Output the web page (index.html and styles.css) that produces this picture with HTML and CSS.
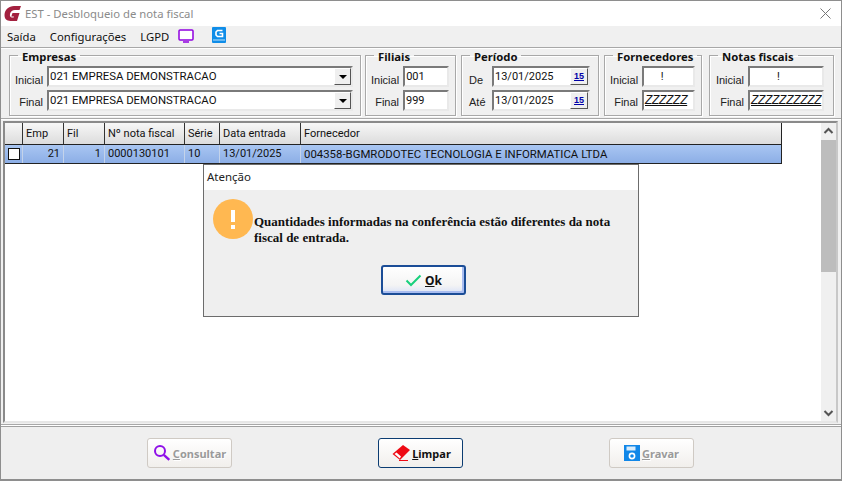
FILE: index.html
```html
<!DOCTYPE html>
<html lang="pt">
<head>
<meta charset="utf-8">
<title>EST - Desbloqueio de nota fiscal</title>
<link rel="stylesheet" href="styles.css">
</head>
<body>
<div class="window">
  <header class="titlebar">
    <svg class="logo" width="18" height="17" viewBox="0 0 18 17"><path d="M10 1C5 1 .5 4.500.5 10S4 16 8 16h5l2.500-8H8.500l-1.200 3.500H10l-.4 1H8C6.500 12.500 5.500 11 6 9c.6-2.500 2.500-4 5-4h4.500L17 1z" fill="#a3213f"/></svg>
    <span class="title">EST - Desbloqueio de nota fiscal</span>
    <svg class="close" width="11" height="11" viewBox="0 0 11 11"><path d="M.5.5l10 10M10.500.5l-10 10" stroke="#777" fill="none"/></svg>
  </header>
  <nav class="menubar">
    <span class="menu-item">Saída</span>
    <span class="menu-item">Configurações</span>
    <span class="menu-item">LGPD</span>
    <svg class="menu-monitor" width="16" height="14" viewBox="0 0 16 14"><rect x="1" y="1" width="14" height="10" rx="1" fill="#fff" stroke="#9000e0" stroke-width="1.500"/><path d="M5 13h6" stroke="#9000e0" stroke-width="1.500"/></svg>
    <svg class="menu-book" width="14" height="16" viewBox="0 0 14 16"><rect width="14" height="16" rx="1" fill="#0f8de8"/><path d="M10.500 3.500H5.500L4 5v3l1.500 1.500h5V6.500H7.500" fill="none" stroke="#fff" stroke-width="1.600"/><path d="M1 13h12" stroke="#bfe2fb"/></svg>
  </nav>
  <section class="filters">
    <fieldset class="group group-empresas">
      <legend>Empresas</legend>
      <div class="field"><label>Inicial</label><div class="combo"><span class="combo-text">021 EMPRESA DEMONSTRACAO</span><span class="combo-btn"><i></i></span></div></div>
      <div class="field"><label>Final</label><div class="combo"><span class="combo-text">021 EMPRESA DEMONSTRACAO</span><span class="combo-btn"><i></i></span></div></div>
    </fieldset>
    <fieldset class="group group-filiais">
      <legend>Filiais</legend>
      <div class="field"><label>Inicial</label><div class="input w47">001</div></div>
      <div class="field"><label>Final</label><div class="input w47">999</div></div>
    </fieldset>
    <fieldset class="group group-periodo">
      <legend>Período</legend>
      <div class="field"><label>De</label><div class="input date">13/01/2025<span class="cal">15</span></div></div>
      <div class="field"><label>Até</label><div class="input date">13/01/2025<span class="cal">15</span></div></div>
    </fieldset>
    <fieldset class="group group-forn">
      <legend>Fornecedores</legend>
      <div class="field"><label>Inicial</label><div class="input w53 center">!</div></div>
      <div class="field"><label>Final</label><div class="input w53 zz">ZZZZZZ</div></div>
    </fieldset>
    <fieldset class="group group-notas">
      <legend>Notas fiscais</legend>
      <div class="field"><label>Inicial</label><div class="input w76 center">!</div></div>
      <div class="field"><label>Final</label><div class="input w76 zz">ZZZZZZZZZZ</div></div>
    </fieldset>
  </section>
  <section class="grid-frame">
    <div class="grid">
      <div class="grid-head">
        <span class="c c0"></span><span class="c c1">Emp</span><span class="c c2">Fil</span><span class="c c3">Nº nota fiscal</span><span class="c c4">Série</span><span class="c c5">Data entrada</span><span class="c c6">Fornecedor</span>
      </div>
      <div class="grid-row">
        <span class="c c0"><i class="check"></i></span><span class="c c1 right">21</span><span class="c c2 right">1</span><span class="c c3">0000130101</span><span class="c c4">10</span><span class="c c5">13/01/2025</span><span class="c c6">004358-BGMRODOTEC TECNOLOGIA E INFORMATICA LTDA</span>
      </div>
    </div>
    <div class="scrollbar">
      <svg class="arrow" width="15" height="17" viewBox="0 0 15 17"><path d="M3.500 10l4-4 4 4" fill="none" stroke="#555" stroke-width="2"/></svg>
      <div class="track"><div class="thumb"></div></div>
      <svg class="arrow" width="15" height="17" viewBox="0 0 15 17"><path d="M3.500 7l4 4 4-4" fill="none" stroke="#555" stroke-width="2"/></svg>
    </div>
  </section>
  <footer class="actions">
    <button class="btn disabled">
      <svg width="18" height="18" viewBox="0 0 18 18"><circle cx="7" cy="7" r="5" fill="none" stroke="#8f10e8" stroke-width="2"/><path d="M10.800 10.800l5.500 5" stroke="#8f10e8" stroke-width="2.400"/></svg>
      <span><u>C</u>onsultar</span>
    </button>
    <button class="btn active">
      <svg width="20" height="18" viewBox="0 0 20 18"><path d="M13 1l7 5-10 10-7.500-6z" fill="#ee0a14"/><path d="M4.500 10l2-1.500 4.500 4-1.200 2z" fill="#fff"/><path d="M9 16.500h9" stroke="#ee0a14"/></svg>
      <span><u>L</u>impar</span>
    </button>
    <button class="btn disabled">
      <svg width="16" height="16" viewBox="0 0 16 16"><path d="M0 0h16v16H0z" fill="#1187e8"/><rect x="2.500" y="1.500" width="9" height="4" fill="#d9ecfb"/><circle cx="8" cy="11" r="2.600" fill="none" stroke="#fff" stroke-width="1.600"/></svg>
      <span><u>G</u>ravar</span>
    </button>
  </footer>
  <div class="dialog">
    <div class="dialog-title">Atenção</div>
    <div class="dialog-body">
      <div class="dialog-msg">
        <div class="alert-icon"><i></i><b></b></div>
        <p>Quantidades informadas na conferência estão diferentes da nota fiscal de entrada.</p>
      </div>
      <button class="ok">
        <svg width="17" height="13" viewBox="0 0 17 13"><path d="M1.500 6.500l4.500 4.500 9.500-9.500" fill="none" stroke="#18d07c" stroke-width="2"/></svg>
        <span><u>O</u>k</span>
      </button>
    </div>
  </div>
</div>
</body>
</html>
```
FILE: styles.css
```css
* { box-sizing: border-box; }
html, body { margin: 0; padding: 0; }
body { width: 842px; height: 481px; overflow: hidden; background: #f0f0f0; font-family: "Noto Sans", "Liberation Sans", sans-serif; }
.window { position: relative; width: 842px; height: 481px; border: 1px solid #8e8e8e; border-bottom: 2px solid #8e8e8e; background: #f0f0f0; display: flex; flex-direction: column; }

.titlebar { height: 25px; background: #fff; display: flex; align-items: center; padding-left: 3px; flex: none; }
.logo { flex: none; }
.title { margin-left: 3px; font-size: 11.300px; color: #8b8b8b; }
.close { margin-left: auto; margin-right: 10px; }

.menubar { height: 21px; display: flex; align-items: center; flex: none; padding-left: 6px; font-size: 11.300px; color: #111; }
.menu-item { margin-right: 14px; }
.menu-item:nth-child(3) { margin-right: 9px; }
.menu-monitor { margin-top: -2px; }
.menu-book { margin: -3px 0 0 18px; }

.filters { flex: none; height: 72px; border-top: 1px solid #a8a8a8; border-bottom: 1px solid #a8a8a8; box-shadow: inset 0 1px 0 #fff, 0 1px 0 #fff; display: flex; padding: 1px 0 0 8px; }
.group { margin: 0 5px 0 0; padding: 5px 0 0 5px; height: 67px; border: 1px solid #a8a8a8; box-shadow: inset 1px 1px 0 #fff, 1px 1px 0 #fff; min-width: 0; flex: none; }
.group legend { padding: 0 4px; margin-left: 3px; font: bold 11.300px/16px "Noto Sans", sans-serif; color: #111; height: 12px; }
.group-empresas { width: 352px; margin-right: 4px; }
.group-filiais { width: 91px; }
.group-periodo { width: 138px; }
.group-forn { width: 98px; margin-right: 7px; }
.group-notas { width: 125px; }

.field { display: flex; align-items: flex-start; height: 24px; justify-content: flex-end; padding-right: 6px; }
.field label { font: 11px/14px "Liberation Sans", sans-serif; color: #222; margin-right: 4px; padding-top: 7px; }
.field + .field label { padding-top: 5px; }
.group-empresas .field { padding-right: 6px; justify-content: flex-start; }
.group-empresas .field label { width: 28px; margin-right: 4px; text-align: right; }
.group-periodo .field { padding-right: 8px; }
.group-periodo .field label { width: 17px; margin-right: 6px; }
.group-notas .field { padding-right: 9px; }

.input, .combo { height: 21px; background: #fff; border: 2px solid; border-color: #7a7a7a #e9e9e9 #e9e9e9 #7a7a7a; font: 11px/15px "Roboto", "Liberation Sans", sans-serif; color: #111; padding: 1px 0 0 1px; position: relative; white-space: nowrap; overflow: hidden; }
.combo { width: 306px; font-size: 11.400px; }
.combo-btn { position: absolute; right: 0; top: 0; bottom: 0; width: 17px; background: #efefef; border: 1px solid; border-color: #fff #555 #555 #fff; display: flex; align-items: center; justify-content: center; }
.combo-btn i { width: 0; height: 0; border: 4px solid transparent; border-top: 4px solid #000; border-bottom: 0; }
.w47 { width: 46px; }
.w53 { width: 53px; }
.w76 { width: 76px; }
.w53.center { text-align: center; padding-right: 14px; }
.w76.center { text-align: center; padding-right: 16px; }
.zz { font: italic 12px/14px "Liberation Sans", sans-serif; text-decoration: underline; letter-spacing: -.3px; padding-left: 1px; }
.date { width: 98px; }
.cal { position: absolute; right: 0; top: 0; bottom: 0; width: 18px; background: #efefef; border: 1px solid; border-color: #fff #555 #555 #fff; font: bold 9px/15px "Liberation Sans", sans-serif; color: #0000a8; text-decoration: underline; text-align: center; }

.grid-frame { flex: 1; margin: 2px 3px 3px 2px; border: 2px solid; border-color: #8a8a8a #c8c8c8 #e6e6e6 #8a8a8a; background: #fff; display: flex; min-height: 0; }
.grid { width: 816px; flex: none; }
.grid-head, .grid-row { display: flex; width: 777px; }
.grid-head { height: 22px; background: linear-gradient(#f7f7f7, #dcdcdc); font: 11px "Roboto", sans-serif; color: #111; border-bottom: 1px solid #222; }
.grid-row { height: 19px; background: linear-gradient(#a9c6f2, #8caee6); border-bottom: 1px solid #222; font: 11px/18px "Roboto", sans-serif; color: #111; }
.c { display: block; border-right: 1px solid #333; padding: 0 3px; white-space: nowrap; overflow: hidden; flex: none; line-height: 21px; }
.grid-row .c { border-right-color: #c4d3ea; line-height: 18px; }
.c0 { width: 18px; padding: 0; display: flex; align-items: center; justify-content: center; }
.c1 { width: 41px; }
.c2 { width: 41px; }
.c3 { width: 80px; }
.c4 { width: 35px; }
.c5 { width: 81px; }
.c6 { flex: 1; width: auto; border-right: 1px solid #222; }
.grid-row .c6 { font-size: 11.400px; border-right-color: #222; }
.right { text-align: right; }
.check { display: block; width: 12px; height: 12px; background: #fff; border: 1px solid #111; }

.scrollbar { width: 15px; background: #f0f0f0; display: flex; flex-direction: column; flex: none; }
.arrow { flex: none; width: 15px; height: 17px; }
.track { flex: 1; min-height: 0; }
.thumb { height: 132px; background: #bdbdbd; }

.actions { flex: none; height: 53px; border-top: 1px solid #a0a0a0; box-shadow: 0 -1px 0 #fff, 0 -2px 0 #a8a8a8; display: flex; padding: 11px 0 0 146px; gap: 146px; background: #efefef; }
.btn { width: 85px; height: 30px; border-radius: 3px; padding: 0; background: linear-gradient(#fff, #f1efec); font: bold 11px "Noto Sans", sans-serif; display: flex; align-items: center; justify-content: center; gap: 2px; }
.btn.disabled { border: 1px solid #cfcac4; color: #9a9a9a; text-shadow: 1px 1px 0 #fff; }
.btn.active { border: 1px solid #0b3c72; color: #111; }

.dialog { position: absolute; left: 202px; top: 163px; width: 436px; height: 153px; border: 1px solid #6c6c6c; background: #efefef; }
.dialog-title { height: 25px; background: #fff; font-size: 11.500px; line-height: 24px; padding-left: 3px; color: #222; }
.dialog-body { padding: 9px 0 0 9px; }
.dialog-msg { display: flex; }
.alert-icon { width: 40px; height: 40px; border-radius: 50%; background: #ffb851; position: relative; flex: none; }
.alert-icon i { position: absolute; left: 18px; top: 11px; width: 4px; height: 12px; background: #fff; }
.alert-icon b { position: absolute; left: 18px; top: 26px; width: 4px; height: 4px; background: #fff; }
.dialog-msg p { margin: 15px 0 0 1px; width: 365px; font: bold 13px/16px "Liberation Serif", serif; color: #111; }
.ok { position: absolute; left: 177px; top: 100px; width: 85px; height: 30px; padding: 0; border: 2px solid #1b4d97; border-radius: 3px; background: linear-gradient(#fff, #f4f4f4 70%, #dbe3f7); box-shadow: inset -2px -2px 0 #a9bdf0; font: bold 12px "Noto Sans", sans-serif; color: #111; display: flex; align-items: center; justify-content: center; gap: 3px; }
```
